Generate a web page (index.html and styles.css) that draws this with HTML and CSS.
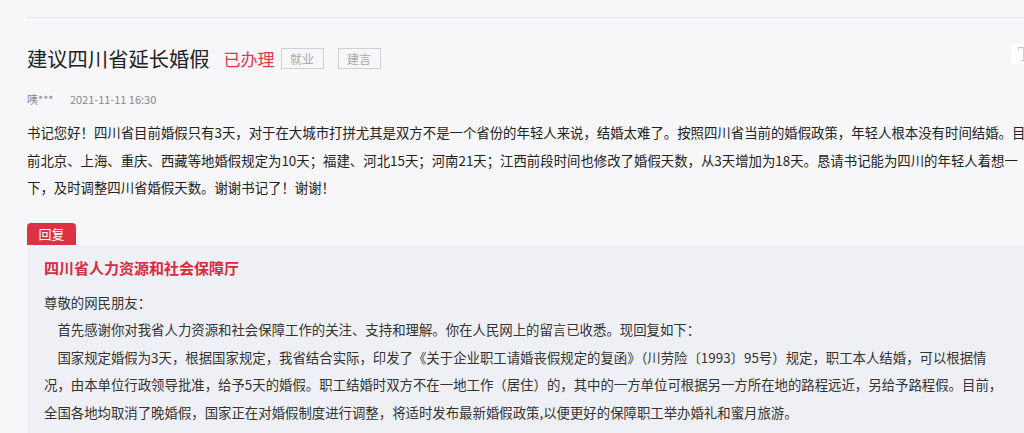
FILE: index.html
```html
<!DOCTYPE html>
<html lang="zh-CN">
  <head>
    <meta charset="UTF-8" />
    <meta name="viewport" content="width=device-width, initial-scale=1.0" />
    <title>建议四川省延长婚假</title>
    <link rel="stylesheet" href="styles.css">
  </head>
  <body>
    <div class="page">
      <!-- 留言标题 -->
      <div class="head">
        <h1 class="title">建议四川省延长婚假</h1>
        <span class="state">已办理</span>
        <span class="tag">就业</span>
        <span class="tag">建言</span>
        <span class="font-btn">T</span>
      </div>
      <div class="meta">
        <span class="user">咦***</span>
        <span class="time">2021-11-11 16:30</span>
      </div>

      <p class="content">书记您好！四川省目前婚假只有3天，对于在大城市打拼尤其是双方不是一个省份的年轻人来说，结婚太难了。按照四川省当前的婚假政策，年轻人根本没有时间结婚。目前北京、上海、重庆、西藏等地婚假规定为10天；福建、河北15天；河南21天；江西前段时间也修改了婚假天数，从3天增加为18天。恳请书记能为四川的年轻人着想一下，及时调整四川省婚假天数。谢谢书记了！谢谢！</p>

      <!-- 回复 -->
      <div class="reply">
        <span class="reply-tab">回复</span>
        <div class="reply-box">
          <h3 class="org">四川省人力资源和社会保障厅</h3>
          <p class="greet">尊敬的网民朋友：</p>
          <p class="para">首先感谢你对我省人力资源和社会保障工作的关注、支持和理解。你在人民网上的留言已收悉。现回复如下：</p>
          <p class="para">国家规定婚假为3天，根据国家规定，我省结合实际，印发了《关于企业职工请婚丧假规定的复函》（川劳险〔1993〕95号）规定，职工本人结婚，可以根据情况，由本单位行政领导批准，给予5天的婚假。职工结婚时双方不在一地工作（居住）的，其中的一方单位可根据另一方所在地的路程远近，另给予路程假。目前，全国各地均取消了晚婚假，国家正在对婚假制度进行调整，将适时发布最新婚假政策,以便更好的保障职工举办婚礼和蜜月旅游。</p>
        </div>
      </div>
    </div>
  </body>
</html>
```

FILE: styles.css
```css
* {
  margin: 0;
  padding: 0;
  box-sizing: border-box;
}
body {
  background: #f7f6f9;
  font-family: "Noto Sans CJK SC", "Noto Sans", sans-serif;
  color: #333;
  overflow: hidden;
}
.page {
  width: 1020px;
  margin-left: 27px;
  padding-top: 17px;
}
.head {
  display: flex;
  align-items: center;
  border-top: 1px solid #e8e7eb;
  padding-top: 26px;
  position: relative;
}
.title {
  font-size: 20.3px;
  font-weight: normal;
  line-height: 28px;
  color: #222;
  margin-right: 14px;
}
.state {
  font-size: 17px;
  color: #e0384b;
  margin-right: 6px;
}
.tag {
  display: inline-block;
  width: 43px;
  height: 21px;
  line-height: 19px;
  text-align: center;
  border: 1px solid #cfcfcf;
  font-size: 12px;
  color: #a8a8a8;
  margin-right: 14px;
}
.font-btn {
  position: absolute;
  left: 984px;
  top: 26px;
  width: 26px;
  height: 20px;
  background: #fff;
  font-family: "DejaVu Serif", serif;
  font-size: 19px;
  line-height: 20px;
  color: #c8c8c8;
  text-align: center;
}
.meta {
  margin-top: 19px;
  font-size: 11px;
  line-height: 16px;
  color: #888;
}
.user {
  margin-right: 14px;
}
.content {
  width: 1005px;
  margin-top: 12px;
  font-size: 13.4px;
  line-height: 27.5px;
  color: #222;
}
.reply {
  margin-top: 19px;
}
.reply-tab {
  display: inline-block;
  width: 49px;
  height: 22px;
  line-height: 22px;
  background: #dc3243;
  border-radius: 4px 4px 0 0;
  color: #fff;
  font-size: 13px;
  text-align: center;
  vertical-align: bottom;
}
.reply-box {
  background: #eff0f5;
  padding: 10px 40px 20px 17px;
}
.org {
  font-size: 15px;
  font-weight: bold;
  color: #d82a3d;
  line-height: 26px;
  margin-bottom: 8px;
}
.greet,
.para {
  font-size: 13.4px;
  line-height: 27.5px;
  color: #333;
}
.para {
  text-indent: 1em;
}
```
